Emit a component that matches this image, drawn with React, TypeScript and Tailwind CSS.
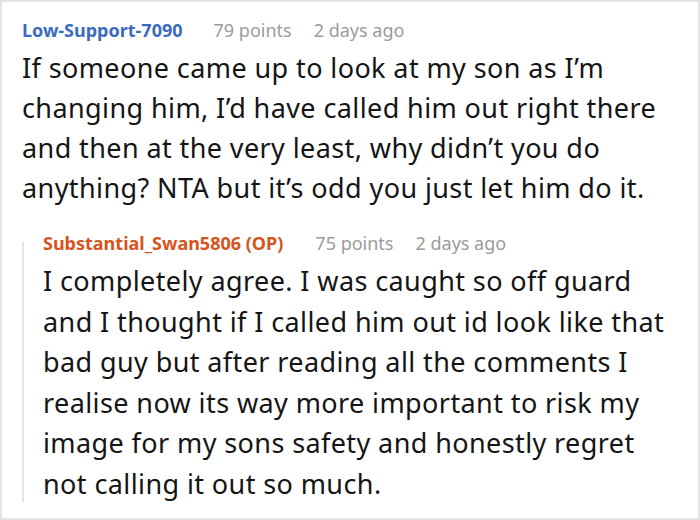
export default function App() {
  return (
    <div className="w-[700px] h-[520px] overflow-hidden bg-white border-2 border-[#e4e4e4] font-['Noto_Sans',sans-serif]">
      <div className="pl-[20px] pt-[16px]">
        {/* parent comment */}
        <div className="flex items-baseline text-[18px] leading-[24px] whitespace-nowrap">
          <span className="font-bold text-[#3b6bbf]">Low-Support-7090</span>
          <span className="ml-[31px] text-[#9b9b9b]">79 points</span>
          <span className="ml-[22px] text-[#9b9b9b]">2 days ago</span>
        </div>
        <p className="mt-[6px] text-[27px] leading-[40px] tracking-[0.4px] text-[#151515] whitespace-nowrap">
          If someone came up to look at my son as I’m
          <br />
          changing him, I’d have called him out right there
          <br />
          and then at the very least, why didn’t you do
          <br />
          anything? NTA but it’s odd you just let him do it.
        </p>

        {/* reply */}
        <div className="mt-[34px] flex flex-col border-l-2 border-[#e6e6e6] pl-[19px]">
          <div className="-mt-[11px] flex items-baseline text-[18px] leading-[24px] whitespace-nowrap">
            <span className="font-bold text-[#d6541d]">Substantial_Swan5806 (OP)</span>
            <span className="ml-[32px] text-[#9b9b9b]">75 points</span>
            <span className="ml-[22px] text-[#9b9b9b]">2 days ago</span>
          </div>
          <p className="mt-[6px] -mb-[2px] text-[27px] leading-[40.5px] tracking-[0.4px] text-[#151515] whitespace-nowrap">
            I completely agree. I was caught so off guard
            <br />
            and I thought if I called him out id look like that
            <br />
            bad guy but after reading all the comments I
            <br />
            realise now its way more important to risk my
            <br />
            image for my sons safety and honestly regret
            <br />
            not calling it out so much.
          </p>
        </div>
      </div>
    </div>
  );
}
